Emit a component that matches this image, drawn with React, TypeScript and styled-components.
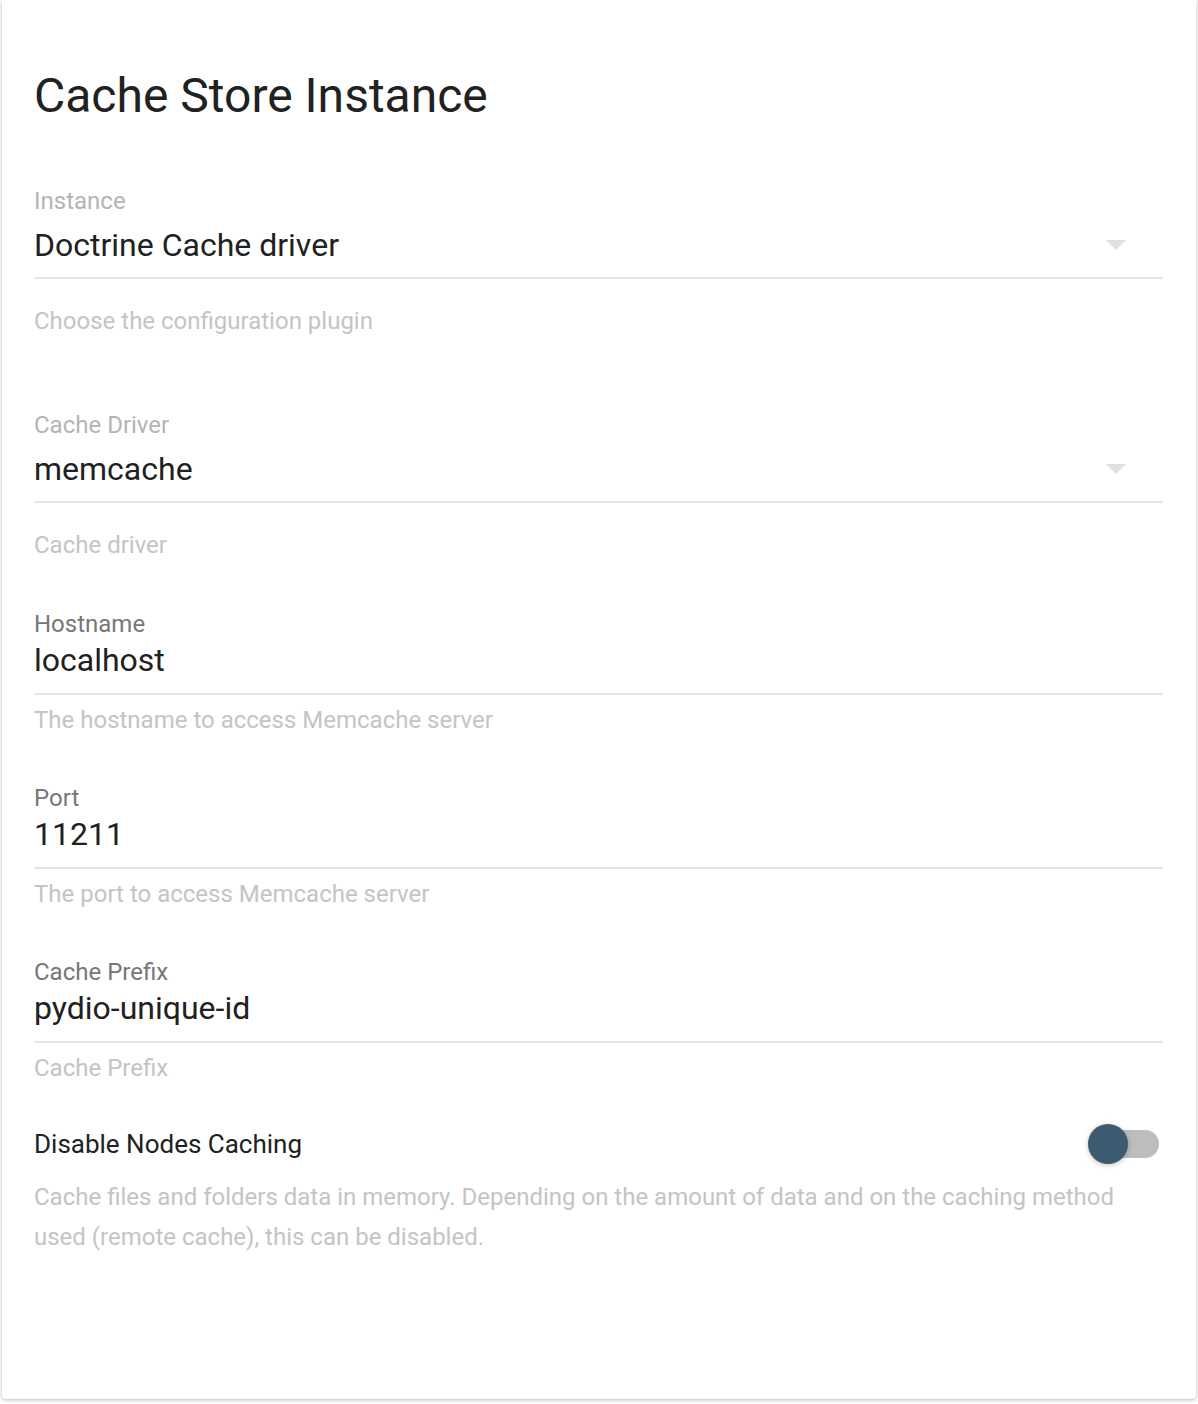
import styled, { createGlobalStyle } from "styled-components";

const GlobalStyle = createGlobalStyle`
  html, body {
    margin: 0;
    padding: 0;
    background: #ffffff;
    font-family: Roboto, "Noto Sans", "Liberation Sans", sans-serif;
  }
`;

const Page = styled.div`
  padding: 0 2px 4px 2px;
`;

const Card = styled.div`
  height: 1399px;
  box-sizing: border-box;
  background: #ffffff;
  border-radius: 0 0 4px 4px;
  box-shadow: 0 1px 5px rgba(0, 0, 0, 0.16), 0 1px 3px rgba(0, 0, 0, 0.14);
  padding: 68px 33px 0 32px;
`;

const Title = styled.h1`
  margin: 0 0 65px;
  font-size: 48px;
  line-height: 56px;
  font-weight: 400;
  color: #212121;
`;

const Field = styled.div<{ $gap: number }>`
  margin-bottom: ${(p) => p.$gap}px;
`;

const Label = styled.div<{ $muted?: boolean }>`
  font-size: 24px;
  line-height: 24px;
  color: ${(p) => (p.$muted ? "#b4b4b4" : "#777777")};
`;

const ValueRow = styled.div<{ $top: number }>`
  display: flex;
  align-items: center;
  justify-content: space-between;
  margin-top: ${(p) => p.$top}px;
  height: 36px;
`;

const Value = styled.div`
  font-size: 32px;
  line-height: 36px;
  color: #212121;
`;

const Arrow = styled.div`
  width: 0;
  height: 0;
  margin-right: 37px;
  border-left: 10px solid transparent;
  border-right: 10px solid transparent;
  border-top: 10px solid #e0e0e0;
`;

const Underline = styled.div<{ $top: number }>`
  margin-top: ${(p) => p.$top}px;
  height: 2px;
  background: #e4e4e4;
`;

const Helper = styled.div<{ $top: number }>`
  margin-top: ${(p) => p.$top}px;
  font-size: 24px;
  line-height: 24px;
  color: #c4c4c4;
`;

const ToggleRow = styled.div`
  display: flex;
  align-items: center;
  justify-content: space-between;
  height: 40px;
  margin-top: -10px;
  padding-right: 4px;
`;

const ToggleLabel = styled.div`
  font-size: 26px;
  color: #212121;
`;

const Switch = styled.div`
  position: relative;
  width: 71px;
  height: 40px;
`;

const Track = styled.div`
  position: absolute;
  left: 1px;
  right: 0;
  top: 6px;
  height: 28px;
  border-radius: 14px;
  background: #bdbdbd;
`;

const Thumb = styled.div`
  position: absolute;
  left: 0;
  top: 0;
  width: 40px;
  height: 40px;
  border-radius: 50%;
  background: #3c5a70;
  box-shadow: 0 1px 6px rgba(0, 0, 0, 0.12), 0 1px 4px rgba(0, 0, 0, 0.12);
`;

const Description = styled.p`
  margin: 13px 0 0;
  font-size: 24px;
  line-height: 40px;
  color: #c4c4c4;
`;

type SelectProps = { label: string; value: string; helper: string; gap: number };

const SelectField = ({ label, value, helper, gap }: SelectProps) => (
  <Field $gap={gap}>
    <Label $muted>{label}</Label>
    <ValueRow $top={14}>
      <Value>{value}</Value>
      <Arrow />
    </ValueRow>
    <Underline $top={14} />
    <Helper $top={30}>{helper}</Helper>
  </Field>
);

type TextProps = { label: string; value: string; helper: string };

const TextField = ({ label, value, helper }: TextProps) => (
  <Field $gap={54}>
    <Label>{label}</Label>
    <ValueRow $top={6}>
      <Value>{value}</Value>
    </ValueRow>
    <Underline $top={15} />
    <Helper $top={13}>{helper}</Helper>
  </Field>
);

export default function App() {
  return (
    <Page>
      <GlobalStyle />
      <Card>
        <Title>Cache Store Instance</Title>
        <SelectField
          label="Instance"
          value="Doctrine Cache driver"
          helper="Choose the configuration plugin"
          gap={80}
        />
        <SelectField label="Cache Driver" value="memcache" helper="Cache driver" gap={55} />
        <TextField label="Hostname" value="localhost" helper="The hostname to access Memcache server" />
        <TextField label="Port" value="11211" helper="The port to access Memcache server" />
        <TextField label="Cache Prefix" value="pydio-unique-id" helper="Cache Prefix" />
        <ToggleRow>
          <ToggleLabel>Disable Nodes Caching</ToggleLabel>
          <Switch>
            <Track />
            <Thumb />
          </Switch>
        </ToggleRow>
        <Description>
          Cache files and folders data in memory. Depending on the amount of data and on the caching
          method used (remote cache), this can be disabled.
        </Description>
      </Card>
    </Page>
  );
}
